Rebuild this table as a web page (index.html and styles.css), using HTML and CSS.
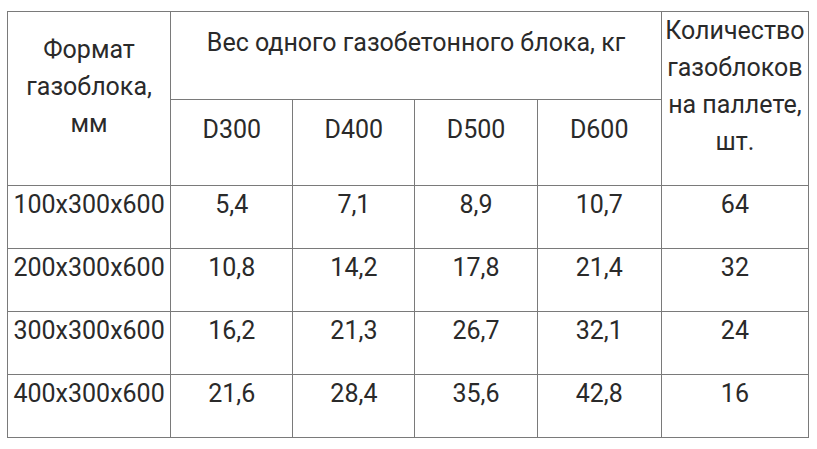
FILE: index.html
```html
<!DOCTYPE html>
<html lang="ru">
<head>
<meta charset="utf-8">
<link rel="stylesheet" href="styles.css">
</head>
<body>
<table class="weights">
  <colgroup>
    <col class="c-format">
    <col class="c-d">
    <col class="c-d">
    <col class="c-d">
    <col class="c-d6">
    <col class="c-qty">
  </colgroup>
  <tr class="r-head1">
    <th rowspan="2"><p>Формат<br>газоблока,<br>мм</p></th>
    <th colspan="4"><p>Вес одного газобетонного блока, кг</p></th>
    <th rowspan="2"><p>Количество<br>газоблоков<br>на паллете,<br>шт.</p></th>
  </tr>
  <tr class="r-head2">
    <th><p>D300</p></th>
    <th><p>D400</p></th>
    <th><p>D500</p></th>
    <th><p>D600</p></th>
  </tr>
  <tr class="r-data">
    <td><p>100x300x600</p></td><td><p>5,4</p></td><td><p>7,1</p></td><td><p>8,9</p></td><td><p>10,7</p></td><td><p>64</p></td>
  </tr>
  <tr class="r-data">
    <td><p>200x300x600</p></td><td><p>10,8</p></td><td><p>14,2</p></td><td><p>17,8</p></td><td><p>21,4</p></td><td><p>32</p></td>
  </tr>
  <tr class="r-data">
    <td><p>300x300x600</p></td><td><p>16,2</p></td><td><p>21,3</p></td><td><p>26,7</p></td><td><p>32,1</p></td><td><p>24</p></td>
  </tr>
  <tr class="r-data">
    <td><p>400x300x600</p></td><td><p>21,6</p></td><td><p>28,4</p></td><td><p>35,6</p></td><td><p>42,8</p></td><td><p>16</p></td>
  </tr>
</table>
</body>
</html>
```

FILE: styles.css
```css
html, body {
  margin: 0;
  background: #ffffff;
}
body {
  padding: 11px 0 0 7px;
  font-family: Roboto, "Liberation Sans", sans-serif;
  color: #2a2a2a;
}
.weights {
  border-collapse: collapse;
  table-layout: fixed;
  width: 802px;
  border: 1px solid #3a3a3a;
}
.c-format { width: 163px; }
.c-d { width: 122px; }
.c-d6 { width: 124px; }
.c-qty { width: 147px; }
.weights th,
.weights td {
  border: 1px solid #7a7a7a;
  padding: 0;
  text-align: center;
  vertical-align: middle;
  font-weight: 400;
  font-size: 25px;
  line-height: 37px;
}
.weights p {
  margin: 0 0 25px;
}
.r-head1 { height: 87px; }
.r-head2 { height: 86px; }
.r-data { height: 62px; }
```
